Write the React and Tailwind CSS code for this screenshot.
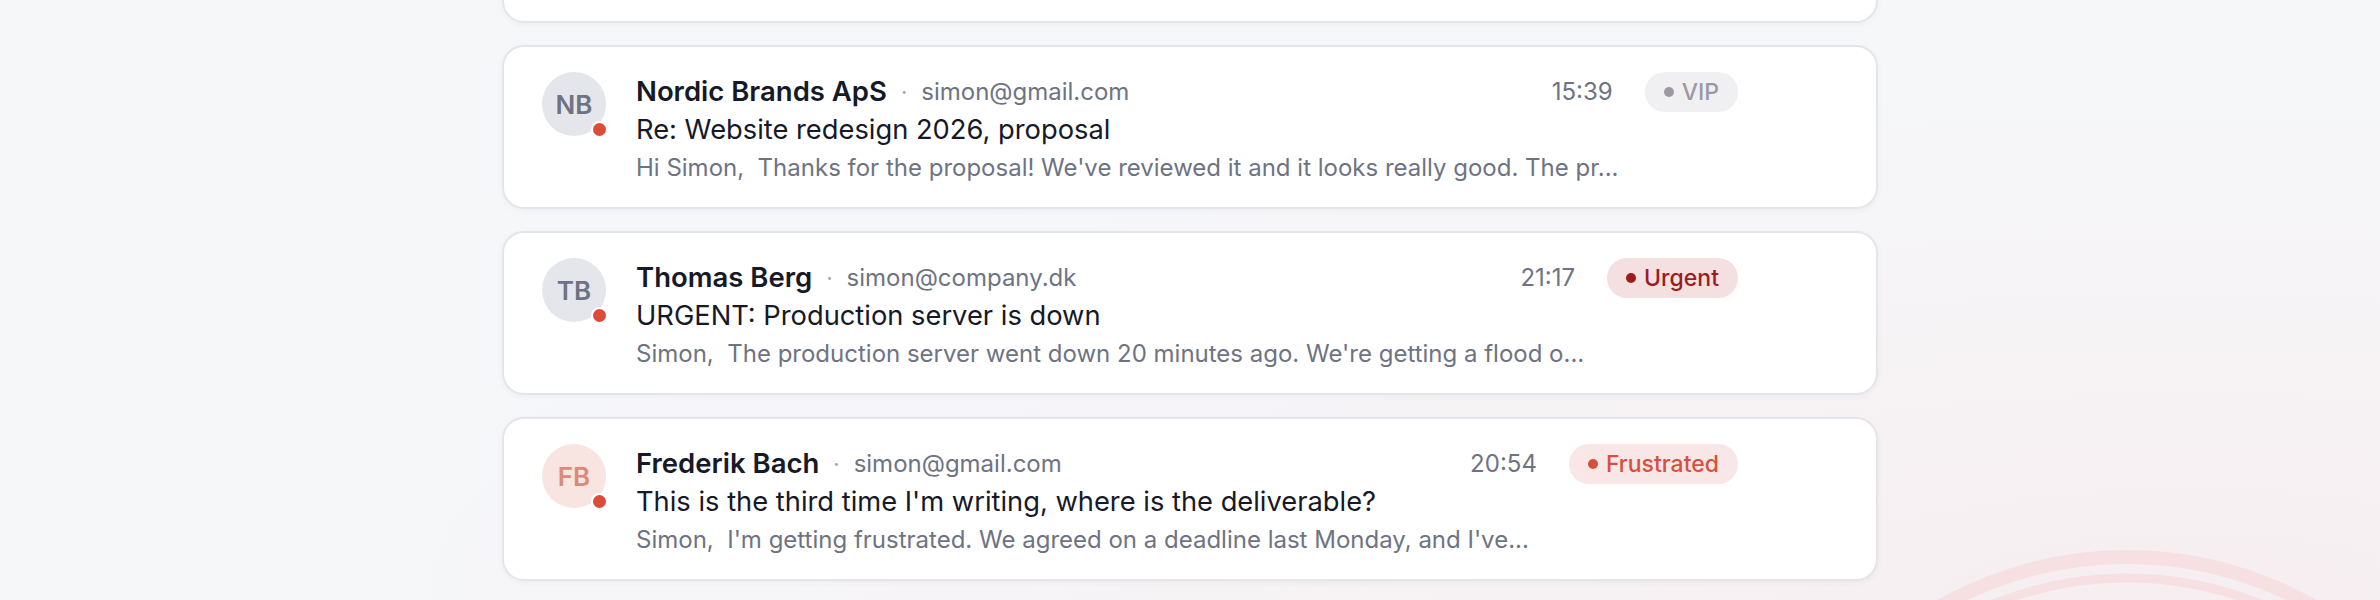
import React from "react";

const emails = [
  {
    id: "e1",
    initials: "NB",
    name: "Nordic Brands ApS",
    email: "simon@gmail.com",
    subject: "Re: Website redesign 2026, proposal",
    preview:
      "Hi Simon,  Thanks for the proposal! We've reviewed it and it looks really good. The pr...",
    time: "15:39",
    avatar: "bg-[#e5e6eb] text-[#6e7383]",
    badge: {
      label: "VIP",
      box: "bg-[#f0eff2] text-[#9c99a4]",
      dot: "bg-[#9c99a4]",
    },
  },
  {
    id: "e2",
    initials: "TB",
    name: "Thomas Berg",
    email: "simon@company.dk",
    subject: "URGENT: Production server is down",
    preview:
      "Simon,  The production server went down 20 minutes ago. We're getting a flood o...",
    time: "21:17",
    avatar: "bg-[#e5e6eb] text-[#6e7383]",
    badge: {
      label: "Urgent",
      box: "bg-[#f5e0e1] text-[#9b1c1f]",
      dot: "bg-[#9b1c1f]",
    },
  },
  {
    id: "e3",
    initials: "FB",
    name: "Frederik Bach",
    email: "simon@gmail.com",
    subject: "This is the third time I'm writing, where is the deliverable?",
    preview:
      "Simon,  I'm getting frustrated. We agreed on a deadline last Monday, and I've...",
    time: "20:54",
    avatar: "bg-[#f8e4e1] text-[#d98c7a]",
    badge: {
      label: "Frustrated",
      box: "bg-[#f8e7e6] text-[#d8503d]",
      dot: "bg-[#d8503d]",
    },
  },
];

const cardClass =
  "rounded-[22px] border-2 border-[#e3e5eb] bg-white shadow-[0_2px_6px_rgba(17,24,39,0.04)]";

function EmailCard({ mail }) {
  return (
    <div className={`flex items-start pl-[38px] pr-[138px] pt-[25px] pb-[19px] ${cardClass}`}>
      <div
        className={`relative shrink-0 w-16 h-16 rounded-full flex items-center justify-center text-[26px] font-semibold ${mail.avatar}`}
      >
        {mail.initials}
        <span className="absolute right-[-2px] bottom-[-2px] w-[17px] h-[17px] rounded-full bg-[#dd4b39] border-2 border-white" />
      </div>

      <div className="ml-[30px] flex-1 min-w-0">
        <div className="flex items-center h-10">
          <span className="text-[27.5px] font-semibold text-[#161927]">
            {mail.name}
          </span>
          <span className="mx-[14px] text-[22px] text-[#a3a6b1]">·</span>
          <span className="text-[24px] text-[#6e7383]">{mail.email}</span>
          <div className="flex-1" />
          <span className="text-[24px] text-[#6e7383]">{mail.time}</span>
          {mail.badge && (
            <span
              className={`ml-[32px] h-10 px-[19px] rounded-full flex items-center gap-[8px] text-[23px] font-medium ${mail.badge.box}`}
            >
              <span className={`w-[10px] h-[10px] rounded-full ${mail.badge.dot}`} />
              {mail.badge.label}
            </span>
          )}
        </div>
        <p className="text-[27.3px] leading-[36px] text-[#161927]">
          {mail.subject}
        </p>
        <p className="text-[24px] leading-[40px] text-[#6e7383] whitespace-pre">
          {mail.preview}
        </p>
      </div>
    </div>
  );
}

export default function App() {
  return (
    <div className="relative h-[600px] overflow-hidden bg-[#f6f7f9] font-['Inter','Noto_Sans',sans-serif]">
      <div className="absolute inset-0 bg-[radial-gradient(ellipse_at_92%_100%,#f6eef0_0%,#f6f3f5_30%,#f6f7f9_60%)]" />
      <svg
        className="absolute left-[1727px] top-[534px] pointer-events-none"
        width="800"
        height="800"
        viewBox="0 0 800 800"
      >
        <circle cx="400" cy="400" r="377" fill="none" stroke="#f6dcdd" strokeWidth="14" opacity="0.8" />
        <circle cx="400" cy="400" r="356" fill="none" stroke="#f6dcdd" strokeWidth="9" opacity="0.8" />
      </svg>

      <div className="relative w-[1376px] mx-auto mt-[-141px] flex flex-col gap-[22px]">
        {/* previous message, scrolled out of view */}
        <div className={`h-[164px] ${cardClass}`} />
        {emails.map((mail) => (
          <EmailCard key={mail.id} mail={mail} />
        ))}
      </div>
    </div>
  );
}
